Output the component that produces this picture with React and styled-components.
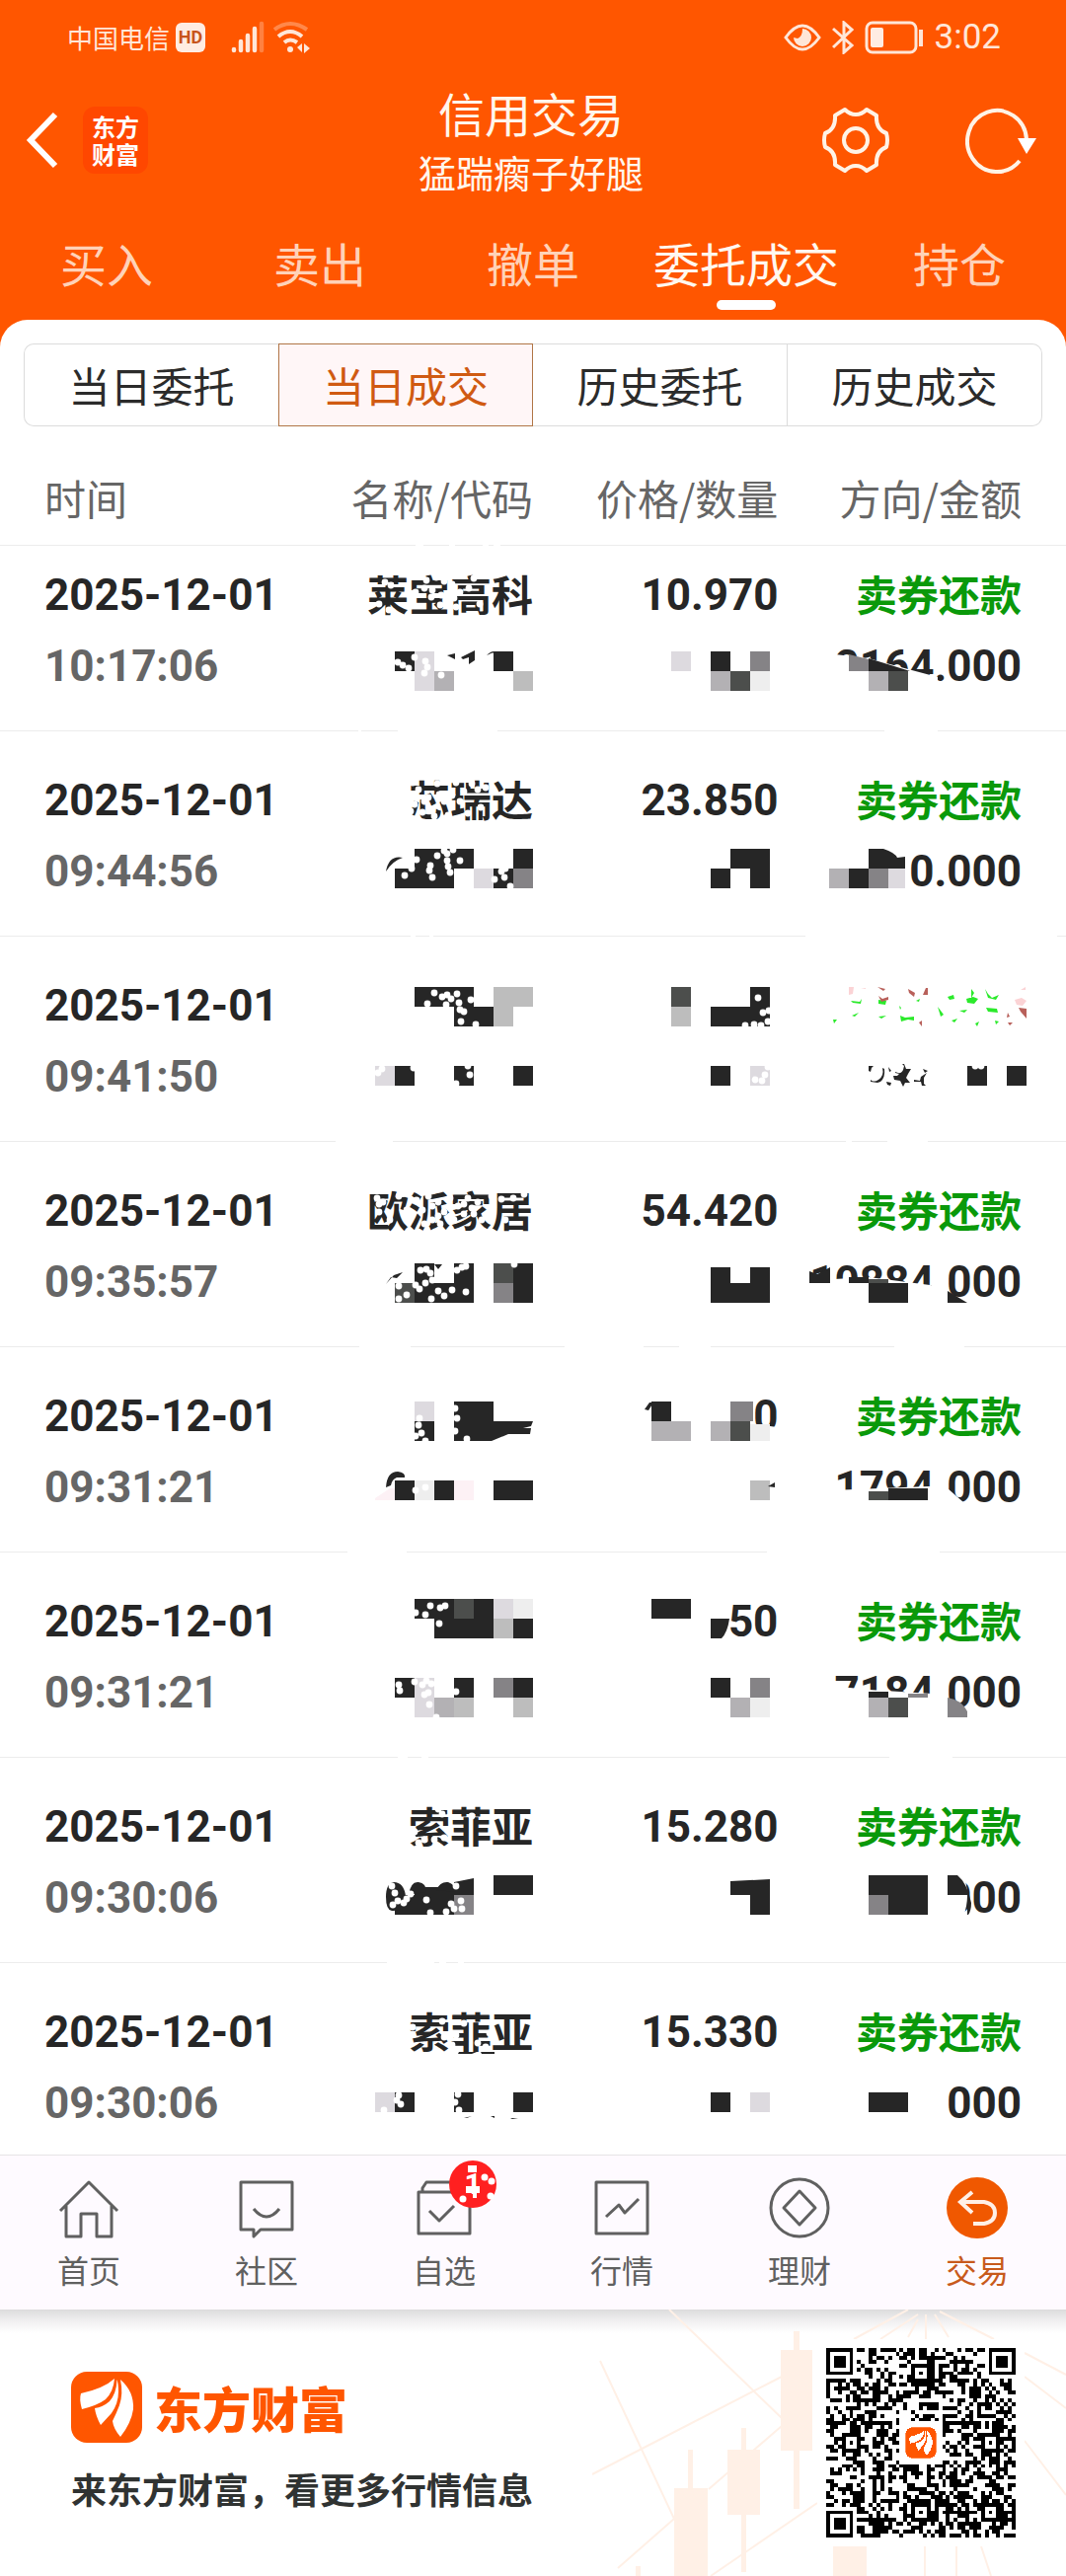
import React from "react";
import styled, { createGlobalStyle, css } from "styled-components";

const INK = "#262626";

const GlobalStyle = createGlobalStyle`
  * {
    box-sizing: border-box;
  }
  body {
    margin: 0;
    background: #fff;
    color: ${INK};
    font-family: "Noto Sans CJK SC", sans-serif;
  }
  button {
    border: 0;
    padding: 0;
    background: none;
    font: inherit;
    color: inherit;
    cursor: pointer;
  }
  svg {
    display: block;
    flex: none;
  }
`;

const Top = styled.header`
  background: #ff5600;
  color: #fff6ec;
`;

const StatusBar = styled.div`
  display: flex;
  justify-content: space-between;
  align-items: center;
  height: 76px;
  padding: 0 66px 0 68px;
  color: #ffe6d8;
`;

const StatusGroup = styled.div`
  display: flex;
  align-items: center;
  gap: ${p => p.$gap}px;
`;

const Carrier = styled.span`
  font-size: 26px;
  line-height: 32px;
`;

const HdTag = styled.span`
  width: 30px;
  height: 30px;
  margin-right: 20px;
  border-radius: 6px;
  background: #ffece2;
  color: #c8541c;
  font: 700 18px/30px Roboto, sans-serif;
  text-align: center;
`;

const Clock = styled.span`
  font: 400 35px/40px Roboto, sans-serif;
`;

const TitleBar = styled.div`
  display: grid;
  grid-template-columns: 1fr auto 1fr;
  align-items: center;
  height: 132px;
  padding: 0 30px 0 26px;
`;

const TitleSide = styled.div`
  display: flex;
  align-items: center;
  justify-content: ${p => (p.$end ? "flex-end" : "flex-start")};
  gap: ${p => (p.$end ? 76 : 24)}px;
`;

const BrandTile = styled.span`
  width: 66px;
  height: 68px;
  padding: 6px 9px;
  border-radius: 12px;
  background: #ff4700;
  color: #fff;
  font-size: 24px;
  font-weight: 700;
  line-height: 28px;
`;

const Titles = styled.div`
  padding-top: 4px;
  text-align: center;
`;

const Title = styled.h1`
  margin: 0;
  font-size: 47px;
  font-weight: 400;
  line-height: 60px;
`;

const Account = styled.p`
  margin: 0;
  font-size: 38px;
  line-height: 60px;
`;

const Tabs = styled.nav`
  display: grid;
  grid-template-columns: repeat(5, 1fr);
  height: 116px;
`;

const Tab = styled.button`
  display: flex;
  flex-direction: column;
  align-items: center;
  padding-top: 26px;
  color: #ffd2b8;
  font-size: 47px;
  line-height: 64px;
  white-space: nowrap;
  ${p =>
    p.$active &&
    css`
      color: #fff8f0;
      &::after {
        content: "";
        width: 60px;
        height: 10px;
        margin-top: 6px;
        border-radius: 5px;
        background: #fff;
      }
    `}
`;

const TopWrap = styled.div`
  background: #ff5600;
`;

const Sheet = styled.main`
  padding-top: 24px;
  border-radius: 28px 28px 0 0;
  background: #fff;
`;

const Segments = styled.div`
  display: grid;
  grid-template-columns: repeat(4, 1fr);
  height: 84px;
  margin: 0 24px 28px;
`;

const Segment = styled.button`
  border: 1px solid #dcdcdc;
  border-left-width: ${p => (p.$first || p.$active ? 1 : 0)}px;
  color: #2b2b2b;
  font-size: 42px;
  line-height: 60px;
  &:first-child {
    border-right: 0;
    border-radius: 10px 0 0 10px;
  }
  &:last-child {
    border-radius: 0 10px 10px 0;
  }
  ${p =>
    p.$active &&
    css`
      border-color: #b07546;
      background: #fff6f7;
      color: #d05a12;
    `}
`;

const Table = styled.table`
  width: 100%;
  table-layout: fixed;
  border-spacing: 0;
`;

const HeadCell = styled.th`
  width: ${p => p.$width};
  height: 92px;
  padding: 0 ${p => (p.$last ? 45 : 0)}px 4px ${p => (p.$first ? 45 : 0)}px;
  color: #666;
  font-size: 42px;
  font-weight: 400;
  line-height: 60px;
  text-align: ${p => (p.$first ? "left" : "right")};
  white-space: nowrap;
`;

const Cell = styled.td`
  position: relative;
  height: 208px;
  padding: 34px 0 29px;
  border-top: 1px solid #ececec;
  font-size: 42px;
  font-weight: 700;
  text-align: right;
  vertical-align: top;
  white-space: nowrap;
  &:first-child {
    padding-left: 45px;
    text-align: left;
  }
  &:last-child {
    padding-right: 45px;
  }
`;

const Row = styled.tr`
  &:first-child ${Cell} {
    height: 188px;
    padding-top: 14px;
  }
  &:last-child ${Cell} {
    height: 195px;
    padding-bottom: 16px;
  }
`;

const Line = styled.div`
  height: 72px;
  line-height: 68px;
`;

const Num = styled(Line)`
  color: ${p => (p.$muted ? "#666" : INK)};
  font-family: Roboto, sans-serif;
  font-size: 44px;
  font-weight: 700;
  line-height: 72px;
`;

const Side = styled(Line)`
  color: #0a990a;
`;

// scribbles laid over the cell text
const Marks = styled.svg`
  position: absolute;
  top: 0;
  right: 0;
  overflow: visible;
  pointer-events: none;
`;

const BottomNav = styled.nav`
  display: grid;
  grid-template-columns: repeat(6, 1fr);
  height: 157px;
  border-top: 1px solid #e6e4e6;
  background: #fefaff;
`;

const NavItem = styled.a`
  display: flex;
  flex-direction: column;
  align-items: center;
  gap: 6px;
  padding-top: 21px;
  color: ${p => (p.$active ? "#c85a1c" : "#606060")};
  font-size: 32px;
  line-height: 48px;
  text-decoration: none;
`;

const NavIcon = styled.span`
  position: relative;
`;

const Badge = styled.span`
  position: absolute;
  top: -16px;
  right: -22px;
  width: 48px;
  height: 48px;
  border-radius: 50%;
  background: #ff2020;
  color: #fff;
  font: 700 30px/48px Roboto, sans-serif;
  text-align: center;
`;

const BadgeDots = styled.svg`
  position: absolute;
  top: 0;
  left: 0;
`;

const Promo = styled.footer`
  position: relative;
  display: flex;
  justify-content: space-between;
  align-items: flex-start;
  height: 270px;
  padding: 30px 42px 0 72px;
  background: linear-gradient(#dcdcdc, #f1f0f1 12px, #fff 24px);
`;

const Candles = styled.svg`
  position: absolute;
  top: 0;
  right: 0;
`;

const PromoText = styled.div`
  padding-top: 33px;
`;

const Brand = styled.div`
  display: flex;
  align-items: center;
  gap: 12px;
  height: 72px;
  color: #ff5600;
  font-size: 49px;
  font-weight: 900;
  line-height: 68px;
`;

const Slogan = styled.p`
  margin: 18px 0 0;
  color: #303332;
  font-size: 36px;
  font-weight: 700;
  line-height: 56px;
`;

const QrBox = styled.div`
  position: relative;
  padding: 9px;
  background: #fff;
`;

const G = { d: INK, a: "#dddadf", b: "#b3b1b4", c: "#4c4e4c", e: "#eee", f: "#bdbdbd", g: "#858386" };

const cols = {
  name: { x: 340, w: 200 },
  price: { x: 588, w: 200 },
  amount: { x: 780, w: 300 }
};

// tiles: [x, y, w, h, tone]; cut: white shapes; ink: dark strokes; dots: white spots
const rows = [
  {
    top: 552,
    time: "10:17:06",
    name: "莱宝高科",
    price: "10.970",
    amount: "2164.000",
    marks: {
      name: {
        cut: "M421 551h8v3h-8zM455 551h6v3h-6zM489 551h6v3h-6zM500 551h7v3h-7z",
        tiles: [[400, 660, 20, 20, "d"], [420, 660, 20, 40, "a"], [440, 680, 20, 20, "b"], [500, 660, 20, 20, "d"], [520, 680, 20, 20, "f"]],
        ink: "M453 664l8-2v6zM467 666l14-7v10l-6 4v-7l-6 2zM493 664q6-6 10-3q-5 0-10 3z",
        dots: "390,590 396,593 430,596 437,605 447,603 450,589 442,585 432,588 460,606 466,600 475,596 480,586 446,613 384,612 394,618 438,598 486,612 458,592 453,606 421,600 462,615 403,671 408,674 414,677 420,666 431,670 433,676 430,682 447,684"
      },
      price: {
        tiles: [[680, 660, 20, 20, "a"], [720, 660, 20, 20, "d"], [760, 660, 20, 20, "g"], [720, 680, 20, 20, "b"], [740, 680, 20, 20, "c"], [760, 680, 20, 20, "e"]]
      },
      amount: {
        cut: "M846 663L880 667L920 678L950 686V700H846z",
        shapes: [["M860 663L880 668V680H860z", "g"], ["M880 667L922 680H880z", "d"]],
        tiles: [[880, 680, 20, 20, "b"], [900, 680, 20, 20, "c"]]
      }
    }
  },
  {
    top: 740,
    time: "09:44:56",
    name: "芯瑞达",
    price: "23.850",
    amount: "10.000",
    marks: {
      name: {
        cut: "M363 739h3v3h-3zM403 739h101v3h-101z",
        tiles: [[420, 860, 60, 20, "d"], [400, 880, 60, 20, "d"], [480, 880, 20, 20, "a"], [500, 880, 20, 20, "d"], [520, 860, 20, 20, "d"], [520, 880, 20, 20, "g"]],
        ink: "M391 883q3-17 17-14q-10 3-17 14z",
        dots: "418,793 424,800 430,812 436,820 440,827 428,823 434,808 445,805 420,815 416,822 450,812 443,794 462,793 458,806 470,802 478,794 484,800 466,812 474,824 487,818 454,826 492,798 443,867 453,865 453,872 454,878 456,884 436,877 435,882 438,889 410,887 466,872 501,891 511,889 508,883 512,880 517,898 417,880 450,862 459,861 422,871"
      },
      price: { tiles: [[740, 860, 40, 20, "d"], [720, 880, 20, 20, "d"], [760, 880, 20, 20, "d"]] },
      amount: {
        cut: "M896 739h54v3h-54zM870 862h46v40h-46z",
        shapes: [["M880 860h15q12 4 14 9l8-1v12h-37z", "d"]],
        tiles: [[840, 880, 20, 20, "b"], [860, 880, 20, 20, "d"], [880, 880, 20, 20, "g"], [900, 880, 17, 20, "a"]]
      }
    }
  },
  {
    top: 948,
    time: "09:41:50",
    marks: {
      name: {
        cut: "M416 947h5v3h-5zM435 947h4v3h-4z",
        tiles: [[420, 1000, 60, 20, "d"], [460, 1020, 40, 20, "d"], [500, 1000, 20, 40, "f"], [520, 1000, 20, 20, "f"], [380, 1080, 20, 20, "a"], [400, 1080, 20, 20, "d"], [460, 1080, 20, 20, "d"], [520, 1080, 20, 20, "d"]],
        dots: "440,1006 433,1017 448,1010 453,1008 457,1012 463,1007 465,1016 466,1023 470,1025 477,1013 467,1035 482,1038 387,1083 383,1087 476,1089 462,1098 452,1018 474,1080 419,1082"
      },
      price: {
        tiles: [[680, 1000, 20, 20, "c"], [680, 1020, 20, 20, "f"], [760, 1000, 20, 20, "d"], [720, 1020, 60, 20, "d"], [720, 1080, 20, 20, "d"], [760, 1080, 20, 20, "a"]],
        dots: "768,1011 773,1026 755,1039 764,1038 771,1039 779,1024 778,1035 765,1094 772,1095 775,1089 778,1081"
      },
      amount: {
        cut: "M816 947h255v3h-255z",
        green: "M862 1014l9 1l2-3l-1 5l-8-1zM844 1033l4 0l-3 4zM863 1029l7-3l-4 4zM890 1013l8 1l-1 4l-7-1zM890 1030l8-1l-5 3zM911 1019l2 2l-1 2zM912 1029l5 2l9-1v4l-6-1l-7 2zM928 1014l4-2l-1 3zM950 1020l6 8l-3 2zM960 1010l6-2l1 4l-5 1zM979 1012l7-2l5 2l-4 5l-7-1zM984 1002l3 4l-3 5zM998 1002l3 5l4 4l7-3l-3 5l-8-2zM999 1021l11 1l1 4l-10-1zM972 1024l8-1l-3 3zM964 1034l6-2l-3 4zM988 1037l4-2l-2 5zM1008 1034l4 1l-3 3z",
        red: "M889 1000l8 2l-2 2zM890 1009l3 6l7-2v-3l-6 2zM920 1002l7 4l-1 4l-5-4zM938 1001l2 0v7l-5 0zM931 1036l3-2v6zM1032 1021l8 1v10l-6-7zM1021 1026l2 4l-3 1zM1021 1036l5 0l-3 3z",
        pink: "M860 1000h5l-1 7l-4 1zM872 1001h5v1zM1028 1013l7-2l5 3l-4 5l-6-1zM1034 1003l5-3v3z",
        tiles: [[980, 1080, 20, 20, "d"], [1020, 1080, 20, 20, "d"]],
        darkBits: "M880 1080h5l-2 2l-1 4l-2-1zM882 1094q3 3 8 0q6-4 4-12l2 1q1 9-4 13l-3 1l-7-1zM898 1096l5 1l-1 3l-3-1zM900 1081l3 4l-2 1zM907 1086q6 3 8-2l1-4l-2-2h2l2 5h5l-3 5l-2 4l4 5l-5 0l-2 4l-3-6l-6-1l-1-4l4 0l2-2l-4-1zM926 1094l6 1l1-4l6-4l-3 5v6l2 2h-4l-1-4l-7 0zM935 1083l5 2l-3 2z",
        dots: "988,1080 994,1080"
      }
    }
  },
  {
    top: 1156,
    time: "09:35:57",
    name: "欧派家居",
    price: "54.420",
    amount: "10884.000",
    marks: {
      name: {
        cut: "M340 1155h58v3h-58z",
        tiles: [[420, 1280, 20, 40, "d"], [460, 1280, 20, 20, "d"], [440, 1300, 40, 20, "d"], [500, 1280, 20, 20, "c"], [500, 1300, 20, 20, "g"], [520, 1280, 20, 40, "d"], [400, 1300, 20, 20, "c"]],
        ink: "M391 1301l8-9l9-3l-6 6l-6-1zM440 1281h8l-4 5z",
        dots: "382,1214 384,1220 388,1218 395,1236 384,1228 404,1212 412,1226 422,1216 428,1226 434,1212 438,1236 438,1222 444,1218 450,1228 444,1232 456,1214 460,1236 464,1222 470,1230 474,1214 470,1220 478,1224 480,1230 484,1218 488,1236 498,1212 508,1215 512,1236 520,1214 531,1210 446,1240 430,1240 404,1303 404,1316 412,1312 431,1300 437,1316 444,1308 450,1313 458,1307 472,1309 463,1287 468,1284 472,1283 426,1287 432,1286 425,1306 438,1297 421,1302 436,1290 521,1281"
      },
      price: { tiles: [[720, 1284, 20, 36, "d"], [760, 1284, 20, 36, "d"], [740, 1300, 20, 20, "d"]] },
      amount: {
        cut: "M857 1155h6v3h-6zM899 1155h41v3h-41zM810 1298L880 1294L950 1303H960V1325H810zM944 1300h14v22h-14z",
        shapes: [["M820 1288l8 3l13-7v16h-21z", "d"], ["M860 1294h20v6h-20z", "d"], ["M960 1308l20 12h-20z", "d"]],
        tiles: [[880, 1296, 20, 4, "c"], [880, 1300, 40, 20, "d"]]
      }
    }
  },
  {
    top: 1364,
    time: "09:31:21",
    price: "0",
    amount: "1794.000",
    marks: {
      name: {
        cut: "M364 1363h52v3h-52z",
        shapes: [["M460 1420h40v20h40l-2 5l-8 2h8l-1 6h-22l-17 7h-38z", "d"], ["M380 1518l15-10h5v12h-20z", "p"]],
        tiles: [[420, 1420, 20, 20, "a"], [420, 1440, 20, 20, "d"], [400, 1500, 20, 20, "d"], [420, 1500, 20, 20, "e"], [440, 1500, 20, 20, "d"], [460, 1500, 20, 20, "p"], [500, 1500, 40, 20, "d"]],
        ink: "M391 1507q1-16 12-16q8 1 7 6l-8 0q-5 2-6 8z",
        dots: "425,1437 424,1444 427,1452 421,1455 431,1460 463,1437 461,1427 461,1450 473,1458 421,1510 431,1507"
      },
      price: {
        cut: "M572 1363h80v3h-80zM688 1363h32v3h-32zM760 1442l27 4v16h-27z",
        ink: "M653 1428l5-7h4l-5 8z M778 1506l7-4v5z",
        tiles: [[660, 1420, 20, 20, "d"], [660, 1440, 40, 20, "b"], [720, 1440, 20, 20, "b"], [740, 1420, 23, 20, "g"], [740, 1440, 20, 20, "c"], [760, 1443, 20, 17, "e"], [760, 1500, 20, 20, "f"]]
      },
      amount: {
        cut: "M906 1363h71v3h-71zM842 1510L940 1506h20v20H842zM944 1496h14v30h-14zM960 1508l16 14v4h-16z",
        tiles: [[880, 1511, 20, 9, "c"], [900, 1508, 40, 12, "d"]]
      }
    }
  },
  {
    top: 1572,
    time: "09:31:21",
    price: "50",
    amount: "7184.000",
    marks: {
      name: {
        cut: "M352 1571h60v3h-60z",
        tiles: [[420, 1620, 80, 20, "d"], [440, 1640, 60, 20, "d"], [460, 1620, 20, 20, "c"], [500, 1620, 20, 20, "a"], [520, 1620, 20, 20, "e"], [500, 1640, 20, 20, "f"], [520, 1640, 20, 20, "d"], [400, 1700, 20, 20, "d"], [420, 1700, 20, 40, "a"], [440, 1720, 20, 20, "b"], [460, 1700, 20, 20, "d"], [460, 1720, 20, 20, "f"], [500, 1700, 20, 20, "g"], [520, 1700, 20, 20, "d"], [520, 1720, 20, 20, "f"]],
        dots: "421,1634 431,1636 436,1627 446,1629 451,1627 445,1645 404,1707 405,1713 420,1704 428,1707 432,1703 437,1706 430,1717 434,1715 435,1727 462,1714 442,1740"
      },
      price: {
        shapes: [["M720 1640h19q-2 14-8 20h-11z", "d"]],
        tiles: [[660, 1620, 40, 20, "d"], [720, 1700, 20, 20, "d"], [760, 1700, 20, 20, "g"], [740, 1720, 20, 20, "b"], [760, 1720, 20, 20, "e"]]
      },
      amount: {
        cut: "M777 1571h175v3h-175zM842 1708L880 1712L960 1717V1740H842zM944 1700h14v34h-14z",
        shapes: [["M960 1720q14 2 20 14v6h-20z", "g"]],
        tiles: [[880, 1714, 20, 6, "d"], [880, 1720, 20, 20, "b"], [900, 1720, 20, 20, "c"], [920, 1716, 20, 4, "g"]]
      }
    }
  },
  {
    top: 1780,
    time: "09:30:06",
    name: "索菲亚",
    price: "15.280",
    amount: "000",
    marks: {
      name: {
        cut: "M403 1779h10v3h-10zM427 1779h7v3h-7z",
        shapes: [["M460 1907l20-4v17h-20z", "d"]],
        tiles: [[400, 1920, 20, 20, "d"], [420, 1912, 40, 28, "d"], [460, 1920, 20, 20, "g"], [500, 1900, 40, 20, "d"]],
        ink: "M391 1922q0-14 8-15q10 0 12 14q-2 16-14 15q-6-1-6-14zM414 1920q2-14 10-13q8 1 8 10zM442 1915q4-9 12-8q7 2 8 10z",
        dots: "418,1862 424,1867 420,1856 448,1838 450,1862 440,1864 444,1833 430,1864 478,1840 397,1911 400,1918 403,1926 398,1930 409,1928 412,1924 432,1925 457,1929 460,1934 467,1926 468,1934 452,1937 436,1938 462,1911 416,1919"
      },
      price: { shapes: [["M740 1906l40-2v36h-20v-20h-20z", "d"]] },
      amount: {
        cut: "M901 1779h64v3h-64zM958 1900h18q8 20 0 42h-18z",
        shapes: [["M960 1900h10q10 8 14 28q0 8-3 12h-1v-20h-20z", "d"]],
        tiles: [[880, 1900, 60, 40, "d"], [880, 1920, 20, 20, "g"]]
      }
    }
  },
  {
    top: 1988,
    time: "09:30:06",
    name: "索菲亚",
    price: "15.330",
    amount: "000",
    marks: {
      name: {
        cut: "M392 1987h48v3h-48zM445 1987h7v3h-7zM464 1987h6v3h-6z",
        tiles: [[380, 2120, 20, 20, "a"], [400, 2120, 20, 20, "d"], [460, 2120, 20, 20, "d"], [520, 2120, 20, 20, "d"]],
        ink: "M465 2079h18l-5 2h-14zM487 2079h14v2h-13zM470 2146l8-2l-5 2zM497 2144h4v2zM517 2146h8l-6 1z",
        dots: "418,2054 450,2064 458,2072 462,2062 448,2048 470,2050 484,2070 492,2074 496,2060 402,2128 406,2132 404,2123 389,2138 464,2122 461,2130 465,2138"
      },
      price: { tiles: [[720, 2120, 20, 20, "d"], [760, 2120, 20, 20, "a"]] },
      amount: { tiles: [[880, 2120, 40, 20, "d"]] }
    }
  }
];

const tone = key => (key === "p" ? "#fdf1f5" : G[key]);

const CellMarks = ({ row, col }) => {
  const { x, w } = cols[col];
  const { cut, tiles = [], shapes = [], ink, darkBits, dots, green, red, pink } = row.marks[col] || {};
  return (
    <Marks width={w} height="180" viewBox={`${x} ${row.top + 1} ${w} 180`} aria-hidden="true">
      {cut && <path d={cut} fill="#fff" />}
      {shapes.map(([d, key]) => (
        <path key={d} d={d} fill={tone(key)} />
      ))}
      {tiles.map(([tx, ty, tw, th, key]) => (
        <rect key={`${tx}-${ty}-${key}`} x={tx} y={ty} width={tw} height={th} fill={tone(key)} />
      ))}
      {ink && <path d={ink} fill={INK} />}
      {darkBits && <path d={darkBits} fill={INK} />}
      {green && <path d={green} fill="#2bea2b" />}
      {red && <path d={red} fill="#b8605a" />}
      {pink && <path d={pink} fill="#fbd3d5" />}
      {dots &&
        dots.split(" ").map(dot => {
          const [cx, cy] = dot.split(",");
          return <circle key={dot} cx={cx} cy={cy} r="3.4" fill="#fff" />;
        })}
    </Marks>
  );
};

const SIZE = 49;

const inFinder = (r, c) => (r < 8 && c < 8) || (r < 8 && c > SIZE - 9) || (r > SIZE - 9 && c < 8);

const buildQr = () => {
  let seed = 20251201;
  let path = "";
  const centers = [[6, 24], [24, 6], [24, 42], [42, 24], [42, 42]];
  for (let r = 0; r < SIZE; r++) {
    for (let c = 0; c < SIZE; c++) {
      seed = (seed * 1103515245 + 12345) % 2147483648;
      let on = (seed >> 16) % 2 === 0;
      const align = centers.find(([a, b]) => Math.abs(r - a) < 3 && Math.abs(c - b) < 3);
      if (align) {
        const ring = Math.max(Math.abs(r - align[0]), Math.abs(c - align[1]));
        on = ring !== 1;
      }
      if (inFinder(r, c) || (Math.abs(r - 24) < 6 && Math.abs(c - 24) < 6)) on = false;
      if (on) path += `M${c} ${r}h1v1h-1z`;
    }
  }
  [[0, 0], [42, 0], [0, 42]].forEach(([x, y]) => {
    path += `M${x} ${y}h7v7h-7zM${x + 1} ${y + 1}v5h5v-5zM${x + 2} ${y + 2}h3v3h-3z`;
  });
  return path;
};

const qrPath = buildQr();

const LogoMark = ({ size, ...rest }) => (
  <svg width={size} height={size} viewBox="0 0 72 72" {...rest}>
    <rect width="72" height="72" rx="16" fill="#ff5600" />
    <path
      d="M44 7Q33 17 10 22Q8 28 11 38Q27 34 35 28Q43 20 44 7zM46.500 8Q46 22 39 30Q32 36 24 37Q25 45 30 54L41 42Q48 32 48 20Q48 12 46.500 8zM50 8Q53 22 49 34Q46 42 42 50Q43 58 50 66Q61 52 63 38Q64 20 50 8z"
      fill="#fff"
    />
  </svg>
);

const navIcons = {
  home: <path d="M2 34L31 5L60 34M8 29V60H23V37H39V60H54V29" />,
  chat: <path d="M5 5H57V53H25L18 60V53H5zM18 32Q31 48 44 32" />,
  watch: <path d="M5 57V15H57V57zM9 15V11L13 5H50M16 34L26 44L41 29" />,
  chart: <path d="M5 5H57V57H5zM15 40L28 28L34 36L48 22" />,
  wealth: (
    <>
      <circle cx="31" cy="31" r="29" />
      <path d="M31 14L47 31L31 48L15 31z" />
    </>
  )
};

const navItems = [
  { label: "首页", icon: "home" },
  { label: "社区", icon: "chat" },
  { label: "自选", icon: "watch", badge: "1" },
  { label: "行情", icon: "chart" },
  { label: "理财", icon: "wealth" },
  { label: "交易", icon: "trade" }
];

const Status = () => (
  <StatusBar>
    <StatusGroup $gap={6}>
      <Carrier>中国电信</Carrier>
      <HdTag>HD</HdTag>
      <svg width="36" height="34" viewBox="0 0 36 34" stroke="currentColor" strokeWidth="4.500" strokeLinecap="round">
        <path d="M3 30v-1M10 30v-9M17 30V15M24 30V8" />
        <path d="M31 30V3" opacity="0.3" />
      </svg>
      <svg width="40" height="34" viewBox="0 0 40 34" fill="none" stroke="currentColor" strokeWidth="4">
        <path d="M2 9Q18-3 35 9" opacity="0.35" />
        <path d="M6 16Q18 6 30 16M12 22Q18 17 25 22" />
        <circle cx="18" cy="29" r="3" fill="currentColor" stroke="none" />
        <path d="M30 23v9l-5-5zM32 23l6 5l-6 5z" fill="currentColor" stroke="none" />
      </svg>
    </StatusGroup>
    <StatusGroup $gap={11}>
      <svg width="38" height="28" viewBox="0 0 38 28" fill="none" stroke="currentColor" strokeWidth="3">
        <path d="M2 14Q19-10 36 14Q19 38 2 14z" />
        <path d="M19 5a9 9 0 1 1-9 9l4 1q5-2 5-10z" fill="currentColor" stroke="none" />
      </svg>
      <svg width="22" height="34" viewBox="0 0 22 34" fill="none" stroke="currentColor" strokeWidth="3">
        <path d="M1 8L20 25L12 32V2L20 9L1 27" />
      </svg>
      <svg width="60" height="34" viewBox="0 0 60 34" fill="none" stroke="currentColor" strokeWidth="3">
        <rect x="2" y="2" width="50" height="30" rx="6" />
        <rect x="6" y="7" width="13" height="20" rx="2" fill="#ffece2" stroke="none" />
        <path d="M57 9v17" strokeWidth="4" />
      </svg>
      <Clock>3:02</Clock>
    </StatusGroup>
  </StatusBar>
);

const TradeHeader = () => (
  <Top>
    <Status />
    <TitleBar>
      <TitleSide>
        <button aria-label="返回">
          <svg width="34" height="58" viewBox="0 0 34 58" fill="none" stroke="#fff" strokeWidth="6">
            <path d="M30 3L5 29L30 55" />
          </svg>
        </button>
        <BrandTile>东方财富</BrandTile>
      </TitleSide>
      <Titles>
        <Title>信用交易</Title>
        <Account>猛踹瘸子好腿</Account>
      </Titles>
      <TitleSide $end>
        <button aria-label="设置">
          <svg width="70" height="70" viewBox="0 0 70 70" fill="none" stroke="#fff3e6" strokeWidth="4" strokeLinejoin="round">
            <circle cx="35" cy="35" r="12" />
            <path d="M24 4Q29 9 35 9T46 4L56 10Q55 24 66 28Q68 35 66 42Q55 46 56 60L46 66Q41 61 35 61T24 66L14 60Q15 46 4 42Q2 35 4 28Q15 24 14 10z" />
          </svg>
        </button>
        <button aria-label="刷新">
          <svg width="72" height="70" viewBox="0 0 72 70" fill="none" stroke="#fff3e6" strokeWidth="4">
            <path d="M55 56A30 31 0 1 1 62 34" />
            <path d="M53 33h19l-10 16z" fill="#fff" stroke="none" />
          </svg>
        </button>
      </TitleSide>
    </TitleBar>
    <Tabs>
      {["买入", "卖出", "撤单", "委托成交", "持仓"].map(tab => (
        <Tab key={tab} $active={tab === "委托成交"}>
          {tab}
        </Tab>
      ))}
    </Tabs>
  </Top>
);

const DealTable = () => (
  <Table>
    <thead>
      <tr>
        <HeadCell $width="26%" $first>
          时间
        </HeadCell>
        <HeadCell $width="24%">名称/代码</HeadCell>
        <HeadCell $width="23%">价格/数量</HeadCell>
        <HeadCell $width="27%" $last>
          方向/金额
        </HeadCell>
      </tr>
    </thead>
    <tbody>
      {rows.map(row => (
        <Row key={row.top}>
          <Cell>
            <Num>2025-12-01</Num>
            <Num $muted>{row.time}</Num>
          </Cell>
          <Cell>
            <Line>{row.name}</Line>
            <CellMarks row={row} col="name" />
          </Cell>
          <Cell>
            <Num>{row.price}</Num>
            <CellMarks row={row} col="price" />
          </Cell>
          <Cell>
            <Side>{row.amount && "卖券还款"}</Side>
            <Num>{row.amount}</Num>
            <CellMarks row={row} col="amount" />
          </Cell>
        </Row>
      ))}
    </tbody>
  </Table>
);

const Navigation = () => (
  <BottomNav>
    {navItems.map(({ label, icon, badge }) => (
      <NavItem key={label} href="#" $active={icon === "trade"}>
        <NavIcon>
          {icon === "trade" ? (
            <svg width="62" height="64" viewBox="0 0 62 62" fill="none" stroke="#fff0e6" strokeWidth="4">
              <circle cx="31" cy="31" r="31" fill="#f05800" stroke="none" />
              <path d="M26 15L14 25L26 36M14 25H38Q49 27 49 36T38 47H27" />
            </svg>
          ) : (
            <svg width="62" height="64" viewBox="0 0 62 62" fill="none" stroke="currentColor" strokeWidth="3" strokeLinejoin="round">
              {navIcons[icon]}
            </svg>
          )}
          {badge && (
            <Badge>
              {badge}
              <BadgeDots width="48" height="48" fill="#fff" aria-hidden="true">
                <path d="M19 5h9v7h-9zM17 26h14v7H17zM24 30h4v8h-4z" />
                <circle cx="36" cy="17" r="3.500" />
                <circle cx="43" cy="21" r="3.500" />
                <circle cx="42" cy="36" r="3.500" />
                <circle cx="14" cy="39" r="3.500" />
              </BadgeDots>
            </Badge>
          )}
        </NavIcon>
        {label}
      </NavItem>
    ))}
  </BottomNav>
);

const PromoBar = () => (
  <Promo>
    <Candles width="480" height="270" viewBox="0 10 480 270" fill="#fff0e6" stroke="#fff0e6" aria-hidden="true">
      <path d="M78 10L192 120M0 177L192 78M8 62L83 222L26 272M118 192L192 128M120 280L228 206" fill="none" strokeWidth="2" />
      <path d="M320 10L265 40M330 15L292 40M330 20L320 38M338 15v25M347 15L361 38M352 12L407 40M438 54L480 76M438 78L480 110M438 143L480 198M337 250v30M369 250v30M394 250l10 30" fill="none" strokeWidth="2" />
      <path d="M191 51h32v102h-32zM204 32h6v180h-6zM137 152h33v66h-33zM151 130h5v146h-5zM83 191h34v89H83zM97 152h5v40h-5zM244 250h34v30h-34zM44 270h5v10h-5z" stroke="none" />
    </Candles>
    <PromoText>
      <Brand>
        <LogoMark size={72} />
        东方财富
      </Brand>
      <Slogan>来东方财富，看更多行情信息</Slogan>
    </PromoText>
    <QrBox>
      <svg width="192" height="192" viewBox="0 0 49 49" shapeRendering="crispEdges" role="img" aria-label="二维码">
        <path d={qrPath} fill="#000" fillRule="evenodd" />
        <LogoMark size={8} x="20.500" y="20.500" />
      </svg>
    </QrBox>
  </Promo>
);

export default function App() {
  return (
    <>
      <GlobalStyle />
      <TradeHeader />
      <TopWrap>
        <Sheet>
          <Segments>
            {["当日委托", "当日成交", "历史委托", "历史成交"].map((item, i) => (
              <Segment key={item} $first={i === 0} $active={i === 1}>
                {item}
              </Segment>
            ))}
          </Segments>
          <DealTable />
        </Sheet>
      </TopWrap>
      <Navigation />
      <PromoBar />
    </>
  );
}
